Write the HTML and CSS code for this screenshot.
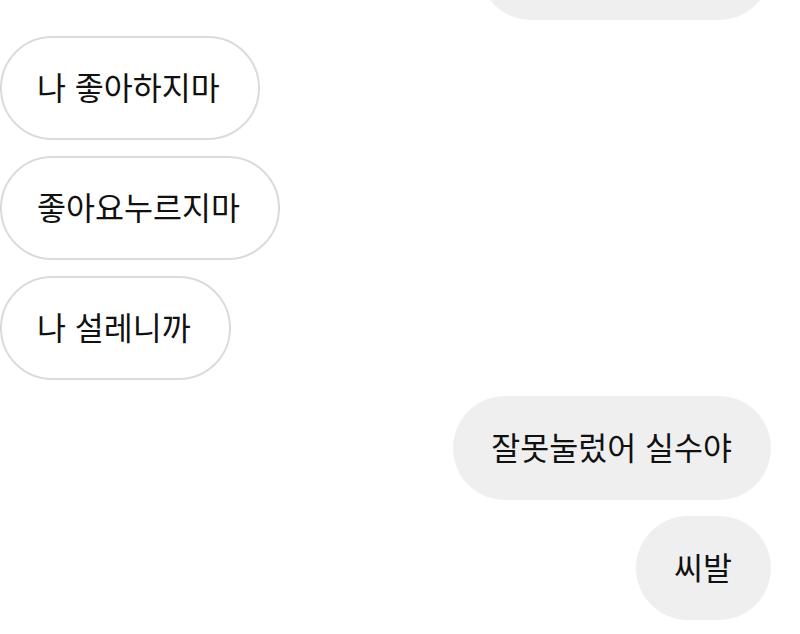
FILE: index.html
```html
<!DOCTYPE html>
<html lang="ko">
<head>
<meta charset="utf-8">
<link rel="stylesheet" href="styles.css">
</head>
<body>
<div class="chat">
  <div class="msg out partial"></div>
  <div class="msg in">나 좋아하지마</div>
  <div class="msg in">좋아요누르지마</div>
  <div class="msg in">나 설레니까</div>
  <div class="msg out">잘못눌렀어 실수야</div>
  <div class="msg out">씨발</div>
</div>
</body>
</html>
```
FILE: styles.css
```css
html, body {
  margin: 0;
  padding: 0;
  background: #ffffff;
  overflow: hidden;
  height: 634px;
}
.chat {
  display: flex;
  flex-direction: column;
  gap: 16px;
  margin-top: -84px;
  padding-right: 29px;
}
.msg {
  box-sizing: border-box;
  height: 104px;
  display: flex;
  align-items: center;
  padding: 0 37px 5px 37px;
  border-radius: 52px;
  font-family: "Noto Sans CJK KR", "Noto Sans", sans-serif;
  font-size: 31.5px;
  color: #111111;
  white-space: nowrap;
}
.in {
  align-self: flex-start;
  background: #ffffff;
  border: 2px solid #dbdbdb;
  padding-left: 35px;
  padding-right: 38px;
}
.out {
  align-self: flex-end;
  background: #efefef;
  padding-left: 38px;
  padding-right: 39px;
}
.partial {
  width: 292px;
}
```
